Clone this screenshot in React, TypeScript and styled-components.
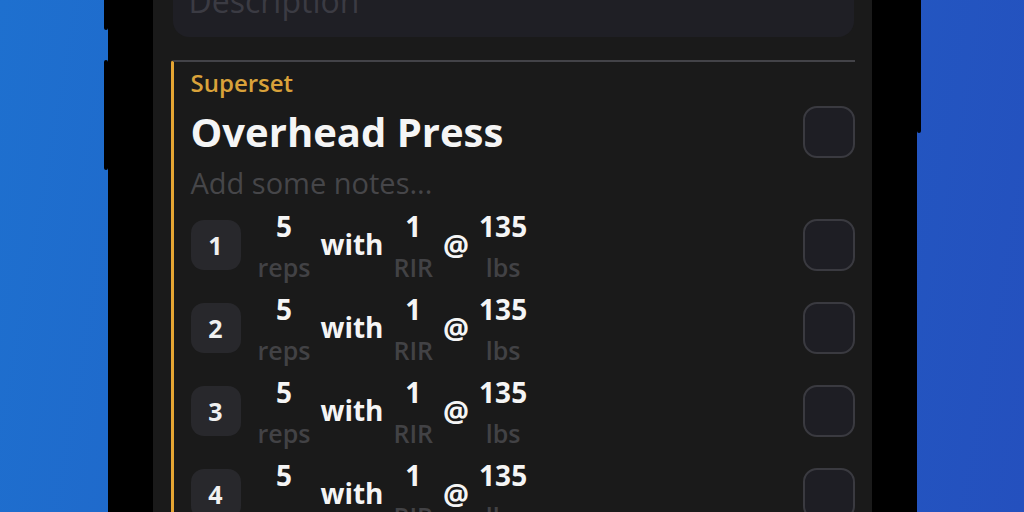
import React from 'react';
import styled, { createGlobalStyle } from 'styled-components';

const GlobalStyle = createGlobalStyle`
  html, body {
    margin: 0;
    padding: 0;
  }
  body {
    background: linear-gradient(100deg, #1e70cf 0%, #2160c6 50%, #2450be 100%);
    font-family: 'Open Sans', 'Noto Sans', sans-serif;
    overflow: hidden;
  }
`;

const Stage = styled.div`
  width: 1024px;
  height: 512px;
  overflow: hidden;
  display: flex;
  justify-content: center;
`;

const Phone = styled.div`
  position: relative;
  width: 809px;
  height: 512px;
  box-sizing: border-box;
  padding: 0 45px;
  background: #000;
`;

const SideButton = styled.div<{ $side: 'left' | 'right'; $top: number; $height: number }>`
  position: absolute;
  ${({ $side }) => ($side === 'left' ? 'left: -4px;' : 'right: -4px;')}
  top: ${({ $top }) => $top}px;
  width: 4px;
  height: ${({ $height }) => $height}px;
  background: #000;
  border-radius: 2px;
`;

const Screen = styled.div`
  height: 100%;
  overflow: hidden;
  background: #1a1a1a;
  padding: 0 17px 0 18px;
  box-sizing: border-box;
`;

const Description = styled.div`
  margin: -40px 1px 0 2px;
  height: 77px;
  box-sizing: border-box;
  padding: 19px 16px 0;
  border-radius: 0 0 16px 16px;
  background: #1f1f25;
  color: #3b3b43;
  font-size: 32px;
  line-height: 44px;
`;

const Card = styled.div`
  margin-top: 23px;
  border-top: 2px solid #434348;
  border-left: 3px solid #e5a533;
  border-top-left-radius: 3px;
  padding: 5px 0 0 17px;
`;

const Tag = styled.div`
  color: #d9a23a;
  font-size: 24px;
  font-weight: 600;
  line-height: 32px;
  margin-bottom: 7px;
`;

const TitleRow = styled.div`
  display: flex;
  align-items: center;
  justify-content: space-between;
  height: 52px;
`;

const Title = styled.div`
  color: #f5f5f5;
  font-size: 40px;
  font-weight: 700;
  line-height: 52px;
`;

const Notes = styled.div`
  margin-top: 6px;
  color: #464649;
  font-size: 29px;
  line-height: 38px;
`;

const SetList = styled.div`
  margin-top: 6px;
  display: flex;
  flex-direction: column;
  gap: 10px;
`;

const SetRow = styled.div`
  display: flex;
  align-items: center;
  gap: 10px;
  height: 73px;
`;

const SetBadge = styled.div`
  width: 50px;
  height: 50px;
  border-radius: 13px;
  background: #28282c;
  color: #f0f0f0;
  font-size: 25px;
  font-weight: 700;
  display: flex;
  align-items: center;
  justify-content: center;
  margin-right: 7px;
`;

const Stack = styled.div`
  display: flex;
  flex-direction: column;
  align-items: center;
  gap: 4px;
  padding-top: 4px;
`;

const Value = styled.div`
  color: #f5f5f5;
  font-size: 28px;
  font-weight: 700;
  line-height: 37px;
`;

const Label = styled.div`
  color: #424245;
  font-size: 25px;
  font-weight: 600;
  line-height: 36px;
`;

const Word = styled.div<{ $size?: number }>`
  color: #f5f5f5;
  font-size: ${({ $size }) => $size ?? 28}px;
  font-weight: 700;
  line-height: 37px;
`;

const Check = styled.div`
  margin-left: auto;
  width: 52px;
  height: 52px;
  box-sizing: border-box;
  border-radius: 14px;
  border: 2px solid #3a3a40;
  background: #1e1e24;
  flex-shrink: 0;
`;

const sets = [
  { reps: 5, rir: 1, weight: 135 },
  { reps: 5, rir: 1, weight: 135 },
  { reps: 5, rir: 1, weight: 135 },
  { reps: 5, rir: 1, weight: 135 }
];

export default function App(): React.ReactElement {
  return (
    <>
      <GlobalStyle />
      <Stage>
        <Phone>
          <SideButton $side='left' $top={-60} $height={90} />
          <SideButton $side='left' $top={60} $height={110} />
          <SideButton $side='right' $top={-60} $height={193} />
          <Screen>
            <Description>Description</Description>
            <Card>
              <Tag>Superset</Tag>
              <TitleRow>
                <Title>Overhead Press</Title>
                <Check />
              </TitleRow>
              <Notes>Add some notes...</Notes>
              <SetList>
                {sets.map((set, i) => (
                  <SetRow key={i}>
                    <SetBadge>{i + 1}</SetBadge>
                    <Stack>
                      <Value>{set.reps}</Value>
                      <Label>reps</Label>
                    </Stack>
                    <Word>with</Word>
                    <Stack>
                      <Value>{set.rir}</Value>
                      <Label>RIR</Label>
                    </Stack>
                    <Word $size={29}>@</Word>
                    <Stack>
                      <Value>{set.weight}</Value>
                      <Label>lbs</Label>
                    </Stack>
                    <Check />
                  </SetRow>
                ))}
              </SetList>
            </Card>
          </Screen>
        </Phone>
      </Stage>
    </>
  );
}
